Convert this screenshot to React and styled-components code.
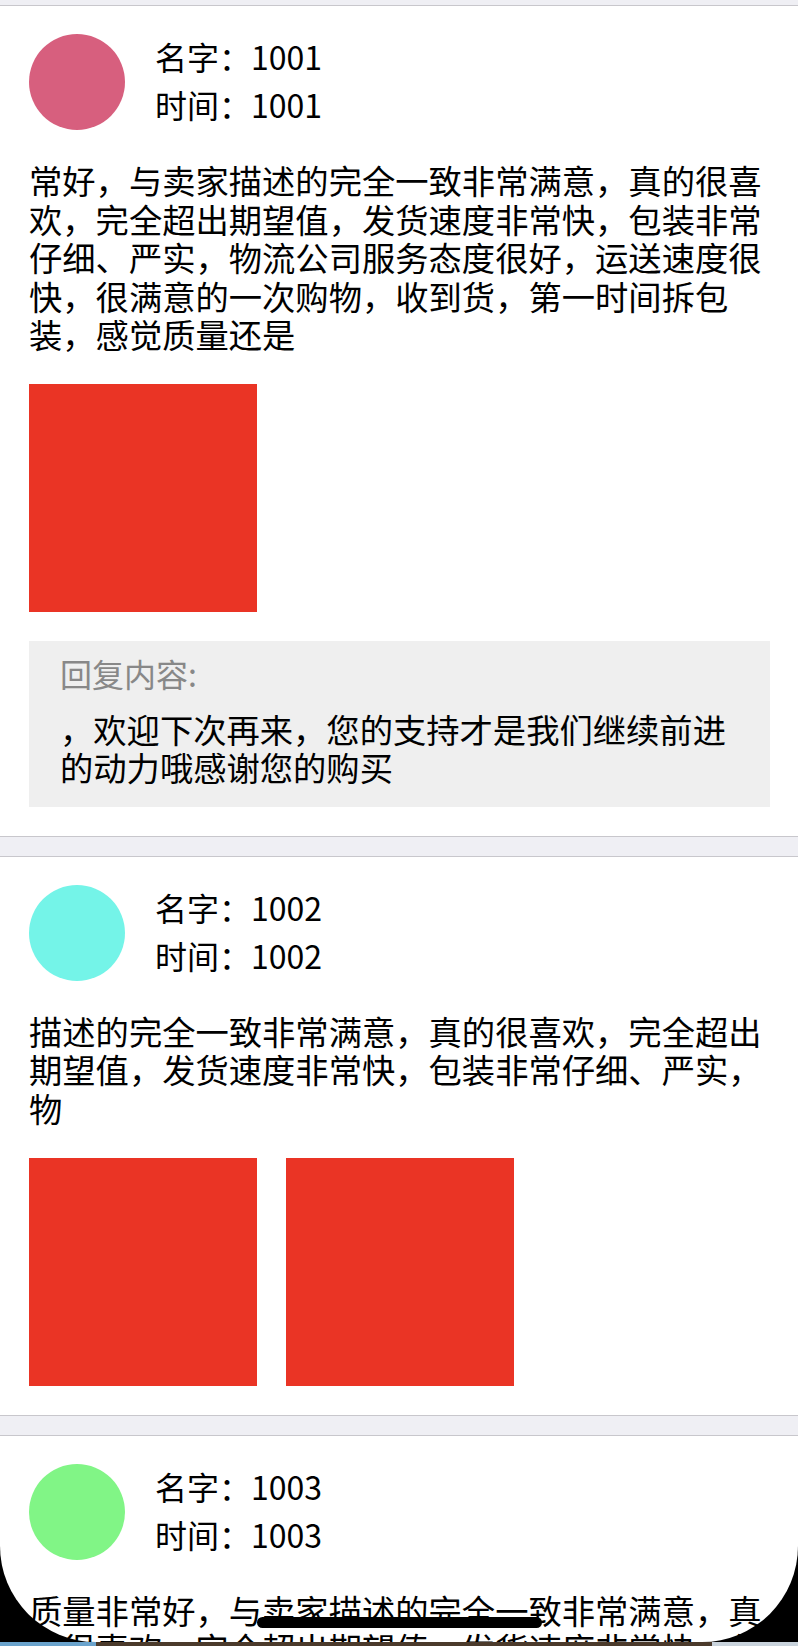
import { createGlobalStyle } from 'styled-components';
import styled from 'styled-components';

const reviews = [
  {
    id: 1001,
    avatar: '#d75f7e',
    content:
      '常好，与卖家描述的完全一致非常满意，真的很喜欢，完全超出期望值，发货速度非常快，包装非常仔细、严实，物流公司服务态度很好，运送速度很快，很满意的一次购物，收到货，第一时间拆包装，感觉质量还是',
    images: 1,
    reply: '，欢迎下次再来，您的支持才是我们继续前进的动力哦感谢您的购买',
  },
  {
    id: 1002,
    avatar: '#74f4e8',
    content:
      '描述的完全一致非常满意，真的很喜欢，完全超出期望值，发货速度非常快，包装非常仔细、严实，物',
    images: 2,
  },
  {
    id: 1003,
    avatar: '#81f586',
    content:
      '质量非常好，与卖家描述的完全一致非常满意，真的很喜欢，完全超出期望值，发货速度非常快，包装非常仔细、严实，物流公司服务态度很好，运送速度很快',
    images: 1,
  },
];

/**
 * Render the list of product reviews
 */
function App() {
  return (
    <>
      <GlobalStyle />
      <List>
        {reviews.map((review) => (
          <Card key={review.id}>
            <Header>
              <Avatar $color={review.avatar} />
              <Info>
                <InfoLine>名字：{review.id}</InfoLine>
                <InfoLine>时间：{review.id}</InfoLine>
              </Info>
            </Header>
            <Content>{review.content}</Content>
            <Photos>
              {Array.from({ length: review.images }).map((_, i) => (
                <Photo key={i} />
              ))}
            </Photos>
            {review.reply && (
              <Reply>
                <ReplyLabel>回复内容:</ReplyLabel>
                <ReplyText>{review.reply}</ReplyText>
              </Reply>
            )}
          </Card>
        ))}
      </List>
      <ScreenEdge>
        <ScreenGlass />
        <Wallpaper />
        <HomeBar />
      </ScreenEdge>
    </>
  );
}

const GlobalStyle = createGlobalStyle`
  html, body {
    margin: 0;
    padding: 0;
    overflow: hidden;
    background: #efeff4;
    font-family: 'Noto Sans CJK SC', 'Noto Sans', sans-serif;
    color: #000;
  }
`;

const List = styled.main`
  display: flex;
  flex-direction: column;
  gap: 19px;
  padding-top: 5px;
  background: #efeff4;
`;

const Card = styled.section`
  background: #fff;
  border-top: 1px solid #c8c7cc;
  border-bottom: 1px solid #c8c7cc;
  padding: 28px 28px 29px 29px;
`;

const Header = styled.div`
  display: flex;
  align-items: flex-start;
  gap: 30px;
  margin-bottom: 31px;
`;

const Avatar = styled.div`
  width: 96px;
  height: 96px;
  border-radius: 50%;
  flex-shrink: 0;
  background: ${(props) => props.$color};
`;

const Info = styled.div`
  display: flex;
  flex-direction: column;
  margin-top: -2px;
`;

const InfoLine = styled.div`
  font-size: 32px;
  line-height: 48px;
`;

const Content = styled.p`
  margin: 0;
  font-size: 33.3px;
  line-height: 38.6px;
`;

const Photos = styled.div`
  display: flex;
  gap: 29px;
  margin-top: 30px;
`;

const Photo = styled.div`
  width: 228px;
  height: 228px;
  background: #ea3425;
`;

const Reply = styled.div`
  margin-top: 29px;
  padding: 13px 31px 20px;
  background: #efefef;
`;

const ReplyLabel = styled.div`
  font-size: 32px;
  line-height: 38.6px;
  color: #888;
  margin-bottom: 17px;
`;

const ReplyText = styled.p`
  margin: 0;
  font-size: 33.3px;
  line-height: 38.6px;
`;

const ScreenEdge = styled.div`
  position: fixed;
  left: 0;
  right: 0;
  bottom: 0;
  height: 110px;
  overflow: hidden;
  pointer-events: none;
  z-index: 10;
`;

const ScreenGlass = styled.div`
  position: absolute;
  left: 0;
  right: 0;
  top: -100px;
  bottom: 4px;
  border-radius: 0 0 96px 96px;
  box-shadow: 0 0 0 140px #000;
`;

const Wallpaper = styled.div`
  position: absolute;
  left: 0;
  right: 0;
  bottom: 0;
  height: 4px;
  background: linear-gradient(
    to right,
    #6aa3cc 0 96px,
    #4b3a2b 96px 712px,
    #c9d3dc 712px
  );
`;

const HomeBar = styled.div`
  position: absolute;
  left: 50%;
  bottom: 18px;
  width: 285px;
  height: 11px;
  margin-left: -142px;
  border-radius: 6px;
  background: #000;
`;

export default App;
